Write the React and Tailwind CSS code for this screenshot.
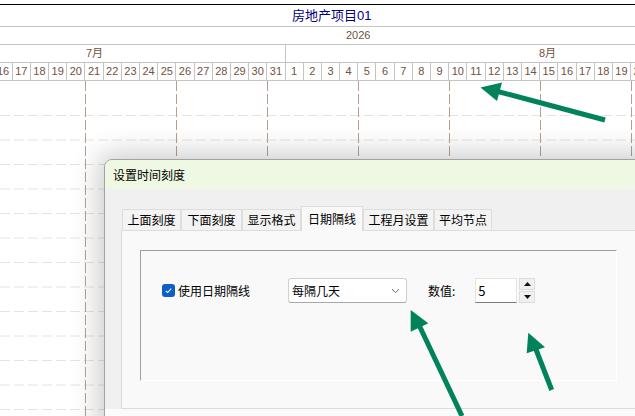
import React from 'react';

const julyDays = [16, 17, 18, 19, 20, 21, 22, 23, 24, 25, 26, 27, 28, 29, 30, 31];
const augDays = [1, 2, 3, 4, 5, 6, 7, 8, 9, 10, 11, 12, 13, 14, 15, 16, 17, 18, 19, 20];
const tabs = [
  { label: '上面刻度', w: 'w-[59px]' },
  { label: '下面刻度', w: 'w-[61px]' },
  { label: '显示格式', w: 'w-[59px]' },
  { label: '日期隔线', w: 'w-[62px]', active: true },
  { label: '工程月设置', w: 'w-[71px]' },
  { label: '平均节点', w: 'w-[58px]' },
];

function ChartGrid() {
  const cols = [85.5, 176.5, 267.5, 358.5, 449.5, 540.5, 631.5];
  const rows = [];
  for (let i = 0; i < 13; i++) rows.push(34.5 + i * 24.5);
  return (
    <svg width="635" height="335" className="block">
      {rows.map((y) => (
        <line key={y} x1="0" x2="635" y1={y} y2={y} stroke="#ece2da" strokeWidth="1" strokeDasharray="10 4" />
      ))}
      {cols.map((x) => (
        <line key={x} x1={x} x2={x} y1="0" y2="335" stroke="#b7a091" strokeWidth="1" strokeDasharray="10 3" />
      ))}
    </svg>
  );
}

function Arrows() {
  const green = '#00825a';
  return (
    <svg width="635" height="416" className="absolute inset-0 pointer-events-none">
      <line x1="605" y1="120" x2="496" y2="91" stroke={green} strokeWidth="5" />
      <polygon points="480.5,87.5 502,82.5 497,101" fill={green} />
      <line x1="419.5" y1="326" x2="462" y2="416" stroke={green} strokeWidth="5" />
      <polygon points="410.7,310 410.7,331.7 428.3,323.3" fill={green} />
      <line x1="535.8" y1="349" x2="551.7" y2="390" stroke={green} strokeWidth="5" />
      <polygon points="528.3,332.7 526.7,353.3 545,347.3" fill={green} />
    </svg>
  );
}

function Dialog() {
  return (
    <div className="absolute left-[104px] top-[159px] w-[560px] h-[290px] border border-[#a3a3a3] rounded-t-[8px] overflow-hidden bg-[#f0f0f0] shadow-[0_0_28px_6px_rgba(0,0,0,0.2)] font-['Noto_Sans_CJK_SC',sans-serif] text-[12px] text-black">
      {/* title bar */}
      <div className="h-[29px] bg-[#eef8e2] flex items-center pl-[8px] leading-none">设置时间刻度</div>

      {/* tabs */}
      <div className="pl-[17px] pt-[16px] flex items-end h-[41px]">
        {tabs.map((t) =>
          t.active ? (
            <div key={t.label} className={`${t.w} h-[25px] -mb-px flex items-center justify-center bg-[#f9f9f9] border border-b-0 border-[#dcdcdc] relative z-10 leading-none`}>
              {t.label}
            </div>
          ) : (
            <div key={t.label} className={`${t.w} h-[21px] flex items-center justify-center bg-[#f3f3f3] border border-b-0 border-[#dddddd] leading-none`}>
              {t.label}
            </div>
          )
        )}
      </div>

      {/* panel */}
      <div className="ml-[16px] h-[179px] bg-[#f9f9f9] border border-r-0 border-[#dcdcdc] pl-[18px] pt-[19px]">
        <div className="w-[477px] h-[131px] border-t border-l border-[#a0a0a0] border-r border-b border-r-white border-b-white pt-[27px] pl-[21px]">
          <div className="flex items-center h-[25px]">
            <div className="w-[13px] h-[13px] rounded-[3px] bg-[#0b5fc5] flex items-center justify-center">
              <svg width="9" height="9" viewBox="0 0 9 9">
                <path d="M1.8 4.8 L3.6 6.5 L7.2 2.6" fill="none" stroke="white" strokeWidth="1.1" />
              </svg>
            </div>
            <span className="ml-[3px] leading-none">使用日期隔线</span>
            <div className="ml-[38px] w-[119px] h-[25px] bg-white border border-[#d0d0d0] border-b-[#a8a8a8] rounded-[3px] flex items-center pl-[3px] pr-[6px] justify-between">
              <span className="leading-none">每隔几天</span>
              <svg width="9" height="6" viewBox="0 0 9 6">
                <path d="M1 1.2 L4.5 4.6 L8 1.2" fill="none" stroke="#555" strokeWidth="0.9" />
              </svg>
            </div>
            <span className="ml-[21px] leading-none">数值:</span>
            <div className="ml-[20px] w-[42px] h-[25px] bg-white border border-[#e4e4e4] border-b-[#7c7c7c] flex items-center pl-[2px] text-[13px] leading-none">
              5
            </div>
            <div className="ml-[2px] w-[16px] h-[25px] flex flex-col gap-[1px]">
              <div className="h-[12px] bg-[#f0f0f0] border border-[#dcdcdc] flex items-center justify-center">
                <svg width="7" height="4" viewBox="0 0 7 4"><polygon points="0,4 7,4 3.5,0" fill="#111" /></svg>
              </div>
              <div className="h-[12px] bg-[#f0f0f0] border border-[#dcdcdc] flex items-center justify-center">
                <svg width="7" height="4" viewBox="0 0 7 4"><polygon points="0,0 7,0 3.5,4" fill="#111" /></svg>
              </div>
            </div>
          </div>
        </div>
      </div>
      <div className="h-[10px] bg-[#fbfbfb]" />
    </div>
  );
}

export default function App() {
  return (
    <div className="relative w-[635px] h-[416px] overflow-hidden bg-white font-['Liberation_Sans','Noto_Sans_CJK_SC',sans-serif]">
      {/* gantt timescale */}
      <div className="h-[5px] border-b border-black" />
      <div className="h-[22px] border-b border-[#c4c4c4] pl-[292px] flex items-center text-[13px] text-[#000080] leading-none">
        房地产项目01
      </div>
      <div className="h-[18px] border-b border-[#c4c4c4] pl-[346px] flex items-center text-[11px] text-[#6f5141] leading-none">
        2026
      </div>
      <div className="h-[18px] border-b border-[#c4c4c4] flex text-[11px] text-[#6f5141] leading-none">
        <div className="w-[286px] shrink-0 border-r border-[#c4c4c4] pl-[86px] flex items-center">7月</div>
        <div className="pl-[253px] flex items-center">8月</div>
      </div>
      <div className="h-[18px] border-b border-[#c4c4c4] flex -ml-[5.5px] text-[11px] text-[#6f5141] leading-none">
        {[...julyDays, ...augDays].map((d, i) => (
          <div key={i} className="w-[18.2px] shrink-0 border-r border-[#c4c4c4] flex items-center justify-center">
            {d}
          </div>
        ))}
      </div>
      <ChartGrid />

      <Dialog />
      <Arrows />
    </div>
  );
}
